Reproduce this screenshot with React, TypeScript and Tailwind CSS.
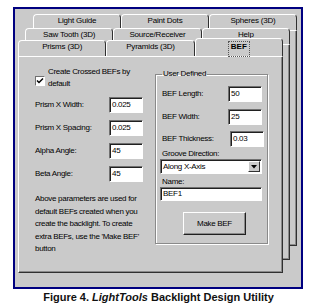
const ui = "font-['Liberation_Sans',Arial,sans-serif]";

function Tab({ label, active }: { label: string; active?: boolean }) {
  if (active) {
    return (
      <div className="flex-1 h-[18px] -mt-[2px] -mb-[1px] relative z-10 bg-[#cacaca] border-t border-l border-white border-r border-r-[#303030] rounded-t-[4px] flex justify-center pt-[3px]">
        <span className="text-[8px] leading-[10px] font-bold px-[2px] outline outline-1 outline-dotted outline-[#555]">{label}</span>
      </div>
    );
  }
  return (
    <div className="flex-1 h-[16px] bg-[#cacaca] border-t border-l border-white border-r border-r-[#303030] rounded-t-[4px] text-center text-[8px] leading-[12px] tracking-[-0.2px]">
      {label}
    </div>
  );
}

function Field({ value, className = '' }: { value: string; className?: string }) {
  return (
    <div className={`w-[34px] h-[16px] bg-white border border-t-[#707070] border-l-[#707070] border-r-white border-b-white shadow-[inset_1px_1px_0_#202020] text-[8px] leading-[14px] pl-[2px] ${className}`}>
      {value}
    </div>
  );
}

function Body({ h, children }: { h: string; children?: React.ReactNode }) {
  return (
    <div className={`${h} bg-[#cacaca] border border-t-white border-l-white border-r-[#303030] border-b-[#303030] shadow-[inset_-1px_-1px_0_#8a8a8a]`}>
      {children}
    </div>
  );
}

const leftRows = [
  ['Prism X Width:', '0.025'],
  ['Prism X Spacing:', '0.025'],
  ['Alpha Angle:', '45'],
  ['Beta Angle:', '45'],
];

const note = [
  'Above parameters are used for',
  'default BEFs created when you',
  'create the backlight. To create',
  "extra BEFs, use the 'Make BEF'",
  'button',
];

export default function App() {
  return (
    <div className={`w-[317px] h-[307px] bg-white text-black ${ui}`}>
      <div className="pt-[7px] pl-[13px]">
        <div className="w-[290px] h-[282px] border-2 border-[#000080] bg-[#cacaca] grid">
          {/* back page: row 1 tabs */}
          <div className="col-start-1 row-start-1 self-start ml-[18px] mt-[5px] w-[264px]">
            <div className="flex">
              <Tab label="Light Guide" />
              <Tab label="Paint Dots" />
              <Tab label="Spheres (3D)" />
            </div>
            <Body h="h-[216px]" />
          </div>

          {/* middle page: row 2 tabs */}
          <div className="col-start-1 row-start-1 self-start ml-[10px] mt-[19px] w-[265px]">
            <div className="flex">
              <Tab label="Saw Tooth (3D)" />
              <Tab label="Source/Receiver" />
              <Tab label="Help" />
            </div>
            <Body h="h-[216px]" />
          </div>

          {/* front page */}
          <div className="col-start-1 row-start-1 self-start ml-[3px] mt-[31px] w-[265px]">
            <div className="flex">
              <Tab label="Prisms (3D)" />
              <Tab label="Pyramids (3D)" />
              <Tab label="BEF" active />
            </div>
            <Body h="h-[217px]">
              <div className="flex pl-[16px] pt-[9px] text-[8px] tracking-[-0.3px]">
                {/* left column */}
                <div className="w-[110px]">
                  <div className="flex gap-[3px] items-start">
                    <div className="w-[10px] h-[10px] mt-[10px] bg-white border border-t-[#707070] border-l-[#707070] border-r-white border-b-white flex items-center justify-center">
                      <svg width="8" height="8" viewBox="0 0 8 8">
                        <path d="M1 3.5 L3 5.5 L7 1.5" stroke="#000" strokeWidth="1.5" fill="none" />
                      </svg>
                    </div>
                    <div className="leading-[12px]">
                      Create Crossed BEFs by
                      <br />
                      default
                    </div>
                  </div>
                  <div className="mt-[7px] flex flex-col gap-[7px]">
                    {leftRows.map(([label, value]) => (
                      <div key={label} className="flex items-center">
                        <span className="w-[74px] leading-[10px]">{label}</span>
                        <Field value={value} />
                      </div>
                    ))}
                  </div>
                  <div className="mt-[11px] leading-[12.5px] whitespace-nowrap">
                    {note.map((line) => (
                      <div key={line}>{line}</div>
                    ))}
                  </div>
                </div>

                {/* User Defined group */}
                <fieldset className="ml-[10px] mt-[3px] w-[113px] self-start border border-[#8a8a8a] shadow-[1px_1px_0_#fff,inset_1px_1px_0_#fff] pl-[4px] pr-[5px] pb-[8px]">
                  <legend className="ml-[2px] px-[1px] leading-[10px]">User Defined</legend>
                  <div className="mt-[7px] flex items-center justify-between pl-[2px]">
                    <span className="leading-[10px]">BEF Length:</span>
                    <Field value="50" />
                  </div>
                  <div className="mt-[7px] flex items-center justify-between pl-[2px]">
                    <span className="leading-[10px]">BEF Width:</span>
                    <Field value="25" />
                  </div>
                  <div className="mt-[6px] flex items-center justify-between pl-[2px]">
                    <span className="leading-[10px]">BEF Thickness:</span>
                    <Field value="0.03" className="-mr-[2px]" />
                  </div>
                  <div className="mt-[2px] pl-[2px] leading-[10px]">Groove Direction:</div>
                  <div className="h-[15px] bg-white border border-t-[#707070] border-l-[#707070] border-r-white border-b-white shadow-[inset_1px_1px_0_#202020] flex items-center">
                    <span className="flex-1 pl-[2px] leading-[12px]">Along X-Axis</span>
                    <div className="w-[12px] h-[11px] mr-[1px] bg-[#cacaca] border border-t-white border-l-white border-r-[#303030] border-b-[#303030] flex items-center justify-center">
                      <svg width="6" height="4" viewBox="0 0 6 4">
                        <path d="M0 0 H6 L3 3.5 Z" fill="#000" />
                      </svg>
                    </div>
                  </div>
                  <div className="mt-[3px] pl-[2px] leading-[10px]">Name:</div>
                  <div className="h-[14px] bg-white border border-t-[#707070] border-l-[#707070] border-r-white border-b-white shadow-[inset_1px_1px_0_#202020] pl-[2px] leading-[12px]">
                    BEF1
                  </div>
                  <div className="mt-[11px] ml-[23px] w-[63px] h-[23px] bg-[#cacaca] border border-t-white border-l-white border-r-[#202020] border-b-[#202020] shadow-[inset_-1px_-1px_0_#8a8a8a] flex items-center justify-center leading-[10px]">
                    Make BEF
                  </div>
                </fieldset>
              </div>
            </Body>
          </div>
        </div>
      </div>
      <div className="mt-[2px] text-center text-[11px] leading-[12px] font-bold text-[#111]">
        Figure 4. <i>LightTools</i> Backlight Design Utility
      </div>
    </div>
  );
}
